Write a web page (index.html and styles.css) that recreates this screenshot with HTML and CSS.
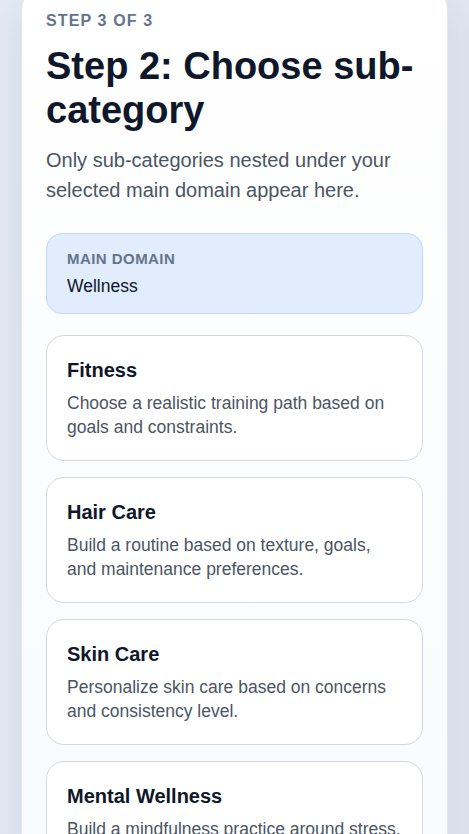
FILE: index.html
```html
<!DOCTYPE html>
<html lang="en">
<head>
    <meta charset="UTF-8">
    <title>Choose sub-category</title>
    <link rel="stylesheet" href="styles.css">
</head>
<body>

<div class="page">
    <div class="wizard">
        <p class="step-label">Step 3 of 3</p>
        <h1 class="step-title">Step 2: Choose sub-category</h1>
        <p class="step-intro">Only sub-categories nested under your selected main domain appear here.</p>

        <div class="domain-box">
            <div class="domain-label">Main domain</div>
            <div class="domain-value">Wellness</div>
        </div>

        <div class="option-list">
            <button class="option">
                <span class="option-name">Fitness</span>
                <span class="option-desc">Choose a realistic training path based on goals and constraints.</span>
            </button>
            <button class="option">
                <span class="option-name">Hair Care</span>
                <span class="option-desc">Build a routine based on texture, goals, and maintenance preferences.</span>
            </button>
            <button class="option">
                <span class="option-name">Skin Care</span>
                <span class="option-desc">Personalize skin care based on concerns and consistency level.</span>
            </button>
            <button class="option">
                <span class="option-name">Mental Wellness</span>
                <span class="option-desc">Build a mindfulness practice around stress, sleep and focus.</span>
            </button>
        </div>
    </div>
</div>

</body>
</html>
```

FILE: styles.css
```css
body {
    margin: 0;
    font-family: "Liberation Sans", Arial, sans-serif;
    background: linear-gradient(90deg, #e3eaf3 0%, #eef2f8 50%, #dfe6ef 100%);
    min-height: 100vh;
    color: #0f172a;
}

.page {
    padding: 0 21px 40px;
}

.wizard {
    margin-top: -14px;
    background: linear-gradient(180deg, #ffffff 0%, #f8fafd 100%);
    border: 1px solid #e2e8f0;
    border-radius: 24px;
    padding: 24px 24px 32px;
    box-shadow: 0 20px 40px rgba(30, 50, 90, 0.10);
}

.step-label {
    margin: 0;
    font-size: 16px;
    font-weight: bold;
    text-transform: uppercase;
    letter-spacing: 0.07em;
    color: #64748b;
    line-height: 20px;
}

.step-title {
    margin: 13px 0 13px;
    font-size: 38px;
    line-height: 44px;
    font-weight: bold;
    color: #0f172a;
}

.step-intro {
    margin: 0;
    font-size: 20px;
    line-height: 30px;
    color: #4b5563;
}

/* selected domain */
.domain-box {
    margin-top: 28px;
    background: #e1ecfd;
    border: 1px solid #c3d8f2;
    border-radius: 16px;
    padding: 16px 20px 15px;
}

.domain-label {
    font-size: 15px;
    line-height: 18px;
    font-weight: bold;
    text-transform: uppercase;
    color: #64748b;
    letter-spacing: 0.03em;
}

.domain-value {
    margin-top: 6px;
    font-size: 17.5px;
    line-height: 24px;
    color: #0f172a;
}

/* options */
.option-list {
    display: flex;
    flex-direction: column;
    gap: 16px;
    margin-top: 21px;
}

.option {
    display: flex;
    flex-direction: column;
    gap: 9px;
    text-align: left;
    background: #ffffff;
    border: 1px solid #d4d8de;
    border-radius: 18px;
    padding: 22px 20px 21px;
    font-family: inherit;
    cursor: pointer;
}

.option-name {
    font-size: 20px;
    line-height: 24px;
    font-weight: bold;
    color: #0f172a;
}

.option-desc {
    font-size: 17.5px;
    line-height: 24px;
    color: #4b5563;
}
```
